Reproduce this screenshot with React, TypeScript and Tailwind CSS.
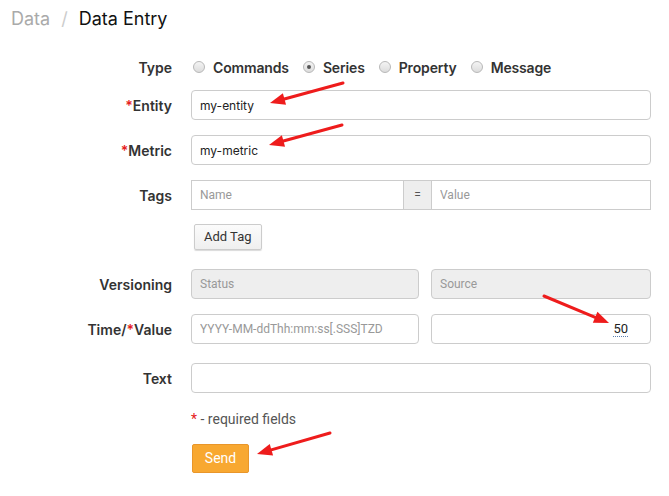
import React from "react";

const labelCls =
  "w-[172px] shrink-0 text-right text-[14px] font-semibold text-[#333] font-['Inter',sans-serif]";
const inputBase =
  "h-[30px] rounded-[4px] border border-[#ccc] px-[8px] text-[#222] outline-none";

function Star() {
  return <span className="text-[#e52020]">*</span>;
}

function Radio({ checked, label }: { checked?: boolean; label: string }) {
  return (
    <div className="flex items-center">
      <span className="flex h-[12px] w-[12px] items-center justify-center rounded-full border border-[#b8b8b8] bg-gradient-to-b from-[#f4f4f4] to-[#dcdcdc]">
        {checked && <span className="h-[4px] w-[4px] rounded-full bg-[#555]" />}
      </span>
      <span className="ml-[8px] text-[14px] font-semibold tracking-[-0.15px] text-[#333] font-['Inter',sans-serif]">{label}</span>
    </div>
  );
}

function Arrow({ x1, y1, x2, y2 }: { x1: number; y1: number; x2: number; y2: number }) {
  const dx = x2 - x1;
  const dy = y2 - y1;
  const len = Math.hypot(dx, dy);
  const ux = dx / len;
  const uy = dy / len;
  const hl = 15;
  const hw = 6;
  const bx = x2 - ux * hl;
  const by = y2 - uy * hl;
  const p1 = `${x2},${y2}`;
  const p2 = `${bx - uy * hw},${by + ux * hw}`;
  const p3 = `${bx + uy * hw},${by - ux * hw}`;
  return (
    <g>
      <line x1={x1} y1={y1} x2={bx + ux * 2} y2={by + uy * 2} stroke="#ee1c1c" strokeWidth={3} strokeLinecap="round" />
      <polygon points={`${p1} ${p2} ${p3}`} fill="#ee1c1c" />
    </g>
  );
}

export default function App() {
  return (
    <div className="relative h-[496px] w-[669px] overflow-hidden bg-white font-['Inter',sans-serif]">
      <div className="flex h-[36px] items-center pl-[11px] text-[18px]">
        <span className="text-[#aaa]">Data</span>
        <span className="mx-[11px] text-[#ccc]">/</span>
        <span className="text-[#111]">Data Entry</span>
      </div>

      <div className="mt-[16px] flex h-[30px] items-center">
        <div className={labelCls}>Type</div>
        <div className="ml-[21px] flex items-center gap-[14px]">
          <Radio label="Commands" />
          <Radio checked label="Series" />
          <Radio label="Property" />
          <Radio label="Message" />
        </div>
      </div>

      <div className="mt-[8px] flex items-center">
        <div className={labelCls}>
          <Star />Entity
        </div>
        <input
          className={`${inputBase} ml-[19px] w-[460px] bg-white text-[12px] font-['Inter',sans-serif]`}
          defaultValue="my-entity"
        />
      </div>

      <div className="mt-[15px] flex items-center">
        <div className={labelCls}>
          <Star />Metric
        </div>
        <input
          className={`${inputBase} ml-[19px] w-[460px] bg-white text-[12px] font-['Inter',sans-serif]`}
          defaultValue="my-metric"
        />
      </div>

      <div className="mt-[15px] flex items-center">
        <div className={labelCls}>Tags</div>
        <div className="ml-[19px] flex h-[30px] w-[460px]">
          <input
            className="h-[30px] w-[213px] border border-[#ccc] bg-white px-[8px] text-[12px] outline-none placeholder:text-[#999] font-['Roboto',sans-serif]"
            placeholder="Name"
          />
          <div className="flex h-[30px] w-[27px] items-center justify-center border-y border-[#ccc] bg-[#eee] text-[12px] text-[#555] font-['Roboto',sans-serif]">
            =
          </div>
          <input
            className="h-[30px] flex-1 border border-[#ccc] bg-white px-[8px] text-[12px] outline-none placeholder:text-[#999] font-['Roboto',sans-serif]"
            placeholder="Value"
          />
        </div>
      </div>

      <div className="mt-[14px] flex">
        <div className="w-[172px] shrink-0" />
        <button className="ml-[22px] h-[26px] rounded-[2px] border border-[#ccc] bg-gradient-to-b from-[#fbfbfb] to-[#efefef] px-[9px] text-[13px] text-[#333] shadow-[0_1px_1px_rgba(0,0,0,0.15)] font-['Roboto',sans-serif]">
          Add Tag
        </button>
      </div>

      <div className="mt-[19px] flex items-center">
        <div className={labelCls}>Versioning</div>
        <div className="ml-[19px] flex w-[460px] gap-[12px]">
          <input
            disabled
            className={`${inputBase} w-[228px] bg-[#eeeeee] text-[12px] placeholder:text-[#999] font-['Roboto',sans-serif]`}
            placeholder="Status"
          />
          <input
            disabled
            className={`${inputBase} min-w-0 flex-1 bg-[#eeeeee] text-[12px] placeholder:text-[#999] font-['Roboto',sans-serif]`}
            placeholder="Source"
          />
        </div>
      </div>

      <div className="mt-[15px] flex items-center">
        <div className={labelCls}>
          Time/<Star />Value
        </div>
        <div className="ml-[19px] flex w-[460px] gap-[12px]">
          <input
            className={`${inputBase} w-[228px] bg-white text-[12px] placeholder:text-[#999] font-['Roboto',sans-serif]`}
            placeholder="YYYY-MM-ddThh:mm:ss[.SSS]TZD"
          />
          <div className="flex h-[30px] flex-1 items-center justify-end rounded-[4px] border border-[#ccc] bg-white pr-[22px]">
            <span className="border-b border-dotted border-[#5b7fb0] leading-[14px] text-[13px] text-[#222] font-['Roboto',sans-serif]">
              50
            </span>
          </div>
        </div>
      </div>

      <div className="mt-[19px] flex items-center">
        <div className={labelCls}>Text</div>
        <input className={`${inputBase} ml-[19px] w-[460px] bg-white text-[12px]`} />
      </div>

      <div className="mt-[16px] flex h-[20px] items-center">
        <div className="w-[172px] shrink-0" />
        <div className="ml-[19px] text-[14px] text-[#555] font-['Roboto',sans-serif]">
          <span className="text-[#e52020]">*</span> - required fields
        </div>
      </div>

      <div className="mt-[15px] flex">
        <div className="w-[172px] shrink-0" />
        <button className="ml-[20px] h-[29px] w-[57px] rounded-[2px] border border-[#e9962a] bg-[#f8a831] text-[14px] text-white font-['Roboto',sans-serif]">
          Send
        </button>
      </div>

      <svg className="pointer-events-none absolute inset-0" width="669" height="496">
        <Arrow x1={343} y1={83} x2={270} y2={103} />
        <Arrow x1={342} y1={125} x2={269} y2={145} />
        <Arrow x1={544} y1={296} x2={609} y2={323} />
        <Arrow x1={330} y1={433} x2={257} y2={454} />
      </svg>
    </div>
  );
}
